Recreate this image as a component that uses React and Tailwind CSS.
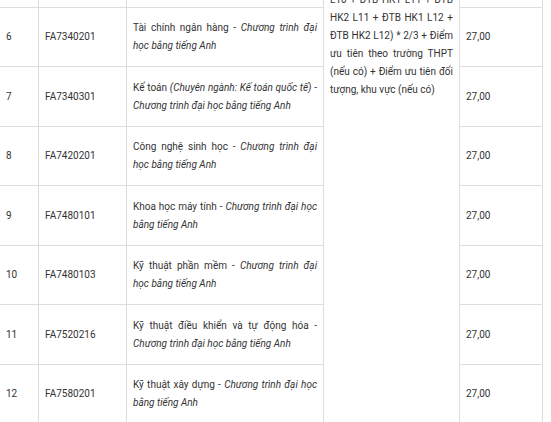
import React from "react";

const rows = [
  { n: "6", code: "FA7340201", name: "Tài chính ngân hàng", it: "Chương trình đại học bằng tiếng Anh" },
  { n: "7", code: "FA7340301", name: "Kế toán", pre: "(Chuyên ngành: Kế toán quốc tế)", it: "Chương trình đại học bằng tiếng Anh" },
  { n: "8", code: "FA7420201", name: "Công nghệ sinh học", it: "Chương trình đại học bằng tiếng Anh" },
  { n: "9", code: "FA7480101", name: "Khoa học máy tính", it: "Chương trình đại học bằng tiếng Anh" },
  { n: "10", code: "FA7480103", name: "Kỹ thuật phần mềm", it: "Chương trình đại học bằng tiếng Anh" },
  { n: "11", code: "FA7520216", name: "Kỹ thuật điều khiển và tự động hóa", it: "Chương trình đại học bằng tiếng Anh" },
  { n: "12", code: "FA7580201", name: "Kỹ thuật xây dựng", it: "Chương trình đại học bằng tiếng Anh" },
];

const cell = "bg-white flex items-center px-[6px]";

export default function App() {
  return (
    <div
      className="w-[551px] h-[422px] overflow-hidden bg-white text-[#333] text-[10px] leading-[18px]"
      style={{ fontFamily: "Roboto, 'Noto Sans', sans-serif" }}
    >
      <div className="w-[543px] bg-[#dddddd] pr-px grid gap-px grid-cols-[38px_87px_196px_135px_82px] grid-rows-[7px_58px_59px_58px_59px_58px_59px_58px]">
        <div className="bg-white" />
        <div className="bg-white" />
        <div className="bg-white" />
        <div className="bg-white row-span-8 col-start-4 row-start-1 px-[6px] overflow-hidden">
          <div className="mt-[-9px] text-justify">
            L10 + ĐTB HK1 L11 + ĐTB HK2 L11 + ĐTB HK1 L12 + ĐTB HK2 L12) * 2/3 + Điểm ưu tiên theo trường THPT (nếu có) + Điểm ưu tiên đối tượng, khu vực (nếu có)
          </div>
        </div>
        <div className="bg-white col-start-5 row-start-1" />
        {rows.map((r, i) => (
          <React.Fragment key={r.n}>
            <div className={cell} style={{ gridRow: i + 2, gridColumn: 1 }}>{r.n}</div>
            <div className={cell} style={{ gridRow: i + 2, gridColumn: 2 }}>{r.code}</div>
            <div className={cell} style={{ gridRow: i + 2, gridColumn: 3 }}>
              <div className="text-justify w-full">
                {r.name}{" "}
                {r.pre ? (
                  <>
                    <i>{r.pre}</i> - <i>{r.it}</i>
                  </>
                ) : (
                  <>
                    - <i>{r.it}</i>
                  </>
                )}
              </div>
            </div>
            <div className={cell} style={{ gridRow: i + 2, gridColumn: 5 }}>27,00</div>
          </React.Fragment>
        ))}
      </div>
    </div>
  );
}
